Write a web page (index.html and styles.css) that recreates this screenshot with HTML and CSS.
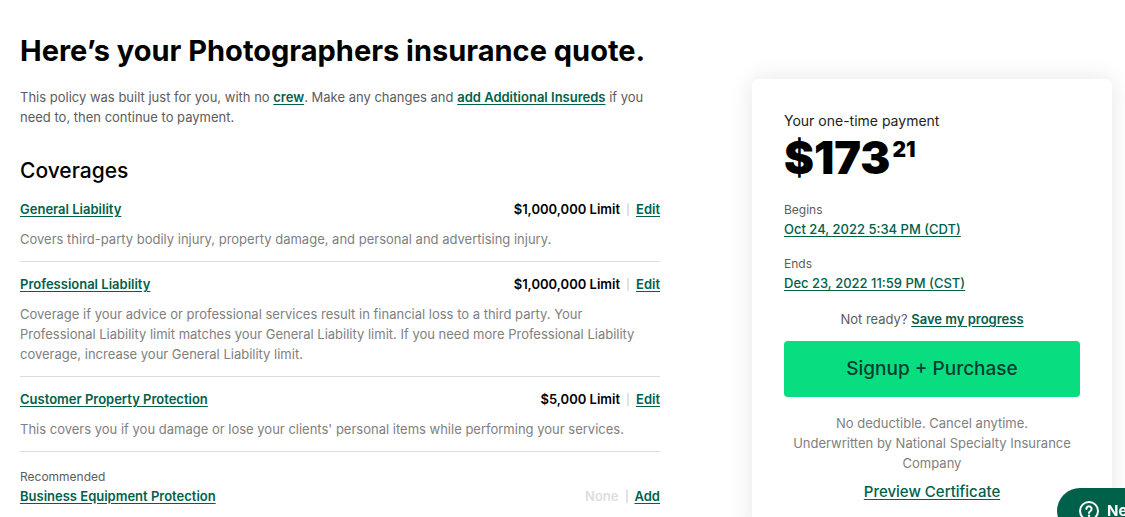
FILE: index.html
```html
<!DOCTYPE html>
<html lang="en">
<head>
  <meta charset="UTF-8">
  <meta name="viewport" content="width=device-width, initial-scale=1">
  <title>Photographers insurance quote</title>
  <link rel="stylesheet" href="styles.css">
</head>
<body>
  <div class="page">
    <main class="quote">
      <h1>Here’s your Photographers insurance quote.</h1>
      <p class="intro">This policy was built just for you, with no <a href="#crew">crew</a>. Make any changes and <a href="#insureds">add Additional Insureds</a> if you need to, then continue to payment.</p>

      <h2>Coverages</h2>

      <section class="coverage">
        <div class="coverage-head">
          <a href="#general">General Liability</a>
          <div class="limit"><span>$1,000,000 Limit</span><i class="bar"></i><a href="#edit-general">Edit</a></div>
        </div>
        <p>Covers third-party bodily injury, property damage, and personal and advertising injury.</p>
      </section>

      <section class="coverage">
        <div class="coverage-head">
          <a href="#professional">Professional Liability</a>
          <div class="limit"><span>$1,000,000 Limit</span><i class="bar"></i><a href="#edit-professional">Edit</a></div>
        </div>
        <p>Coverage if your advice or professional services result in financial loss to a third party. Your Professional Liability limit matches your General Liability limit. If you need more Professional Liability coverage, increase your General Liability limit.</p>
      </section>

      <section class="coverage">
        <div class="coverage-head">
          <a href="#property">Customer Property Protection</a>
          <div class="limit"><span>$5,000 Limit</span><i class="bar"></i><a href="#edit-property">Edit</a></div>
        </div>
        <p>This covers you if you damage or lose your clients' personal items while performing your services.</p>
      </section>

      <section class="coverage recommended">
        <div class="label">Recommended</div>
        <div class="coverage-head">
          <a href="#equipment">Business Equipment Protection</a>
          <div class="limit"><span class="none">None</span><i class="bar"></i><a href="#add-equipment">Add</a></div>
        </div>
      </section>
    </main>

    <aside class="card">
      <div class="payment">Your one-time payment</div>
      <div class="price">$173<sup>21</sup></div>

      <div class="date">
        <div class="label">Begins</div>
        <a href="#begins">Oct 24, 2022 5:34 PM (CDT)</a>
      </div>
      <div class="date">
        <div class="label">Ends</div>
        <a href="#ends">Dec 23, 2022 11:59 PM (CST)</a>
      </div>

      <p class="save">Not ready? <a href="#save">Save my progress</a></p>
      <button type="button" class="purchase">Signup + Purchase</button>
      <p class="terms">No deductible. Cancel anytime.<br>Underwritten by National Specialty Insurance Company</p>
      <a class="preview" href="#certificate">Preview Certificate</a>
    </aside>
  </div>

  <button type="button" class="help">
    <svg width="20" height="20" viewBox="0 0 20 20" fill="none" stroke="#fff" stroke-width="2" stroke-linecap="round" aria-hidden="true">
      <circle cx="10" cy="10" r="9"/>
      <path d="M7.4 7.9a2.6 2.6 0 1 1 4.1 2.1c-.9.6-1.5 1-1.5 2"/>
      <circle cx="10" cy="14.8" r="1.2" fill="#fff" stroke="none"/>
    </svg>
    <span>Need Help?</span>
  </button>
</body>
</html>
```

FILE: styles.css
```css
* { box-sizing: border-box; }
body { margin: 0; background: #fff; color: #000; font-family: Inter, "Liberation Sans", sans-serif; font-size: 13px; line-height: 20px; }
h1, h2, p { margin: 0; }
a { color: #00614a; font-weight: 600; text-underline-offset: 2px; }

.page { display: flex; justify-content: space-between; align-items: flex-start; gap: 32px; padding: 33px 13px 0 20px; }

/* Quote column */
.quote { flex: 0 1 640px; min-width: 0; padding-bottom: 40px; }
h1 { font-size: 29px; line-height: 36px; font-weight: 700; margin-bottom: 18px; }
h2 { font-size: 21px; line-height: 26px; font-weight: 500; margin: 31px 0 3px; }
.intro { color: #5c5c5c; }

.coverage { padding: 12px 0; border-bottom: 1px solid #dcdcdc; }
.coverage p { margin-top: 10px; color: #808080; }
.coverage-head { display: flex; justify-content: space-between; }
.limit { display: flex; align-items: center; font-weight: 600; }
.bar { width: 2px; height: 13px; margin: 0 7px; background: #e2e2e2; }
.none { color: #dedede; }
.recommended { padding-top: 16px; border-bottom: 0; }
.label { color: #5c5c5c; font-size: 12px; line-height: 18px; }
.recommended .label { font-size: 12px; }

/* Payment card */
.card { flex: 0 0 360px; margin-top: 46px; padding: 32px 32px 40px; background: #fff; border-radius: 8px; box-shadow: 0 0 24px rgba(0, 0, 0, 0.1); }
.payment { color: #222; font-size: 14px; }
.price { display: flex; gap: 2px; font-size: 45px; line-height: 54px; font-weight: 900; margin-bottom: 16px; }
.price sup { font-size: 21px; line-height: 38px; }
.date { margin-bottom: 16px; }
.date a { font-weight: 500; }
.save { color: #5c5c5c; text-align: center; margin-bottom: 12px; }
.purchase { display: block; width: 100%; height: 56px; border: 0; border-radius: 4px; background: #08de80; color: #053f31; font: inherit; font-size: 19px; font-weight: 500; cursor: pointer; }
.terms { color: #808080; text-align: center; margin: 16px 0 9px; }
.preview { display: block; text-align: center; font-size: 15px; font-weight: 500; }

/* Help launcher, hangs over the corner of the window */
.help { position: fixed; right: -72px; bottom: -17px; display: flex; align-items: center; gap: 8px; width: 140px; height: 46px; padding: 0 22px; border: 0; border-radius: 23px; background: #00614a; color: #fff; font: inherit; font-size: 15px; font-weight: 700; white-space: nowrap; cursor: pointer; }
.help svg { flex: none; }
```
